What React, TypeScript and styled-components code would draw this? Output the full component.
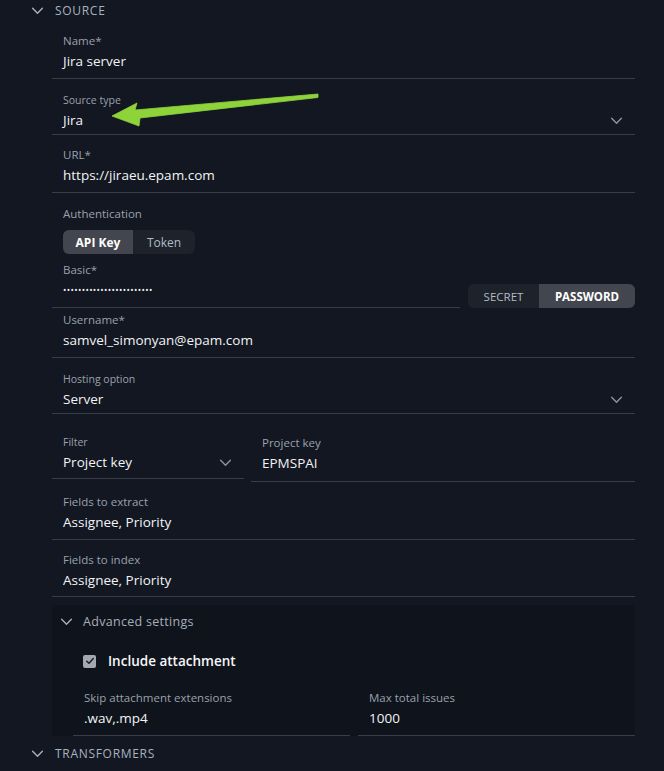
import styled, { createGlobalStyle } from "styled-components";

const GlobalStyle = createGlobalStyle`
  html, body {
    margin: 0;
    padding: 0;
    background: #121721;
  }
  body {
    font-family: "Open Sans", "DejaVu Sans", sans-serif;
    color: #f1f2f4;
  }
`;

const Page = styled.div`
  position: relative;
  width: 664px;
  height: 771px;
  overflow: hidden;
  background: #121721;
`;

const SectionHeader = styled.div<{ $top?: number }>`
  display: flex;
  align-items: center;
  gap: 11px;
  height: 20px;
  padding-left: 31px;
  margin-top: ${(p) => p.$top ?? 0}px;
  color: #a9b2c0;
  font-size: 12px;
  font-weight: 500;
  letter-spacing: 0.7px;
  text-transform: uppercase;
`;

const Body = styled.div`
  display: flex;
  flex-direction: column;
  margin-left: 52px;
  width: 583px;
`;

const Field = styled.div<{ $pt?: number; $pb?: number }>`
  display: flex;
  align-items: flex-end;
  padding: ${(p) => p.$pt ?? 12}px 12px ${(p) => p.$pb ?? 6}px 11px;
  border-bottom: 1px solid #3a3d47;
  flex: 1;
`;

const FieldText = styled.div`
  display: flex;
  flex-direction: column;
  flex: 1;
  min-width: 0;
`;

const Label = styled.div<{ $small?: boolean }>`
  font-size: ${(p) => (p.$small ? "10.5px" : "11.5px")};
  line-height: ${(p) => (p.$small ? "14px" : "16px")};
  color: #9aa1ad;
  margin-bottom: ${(p) => (p.$small ? "2px" : "1px")};
`;

const Value = styled.div`
  font-size: 13.5px;
  line-height: 22px;
  color: #f2f3f5;
  white-space: nowrap;
`;

const Dots = styled(Value)`
  font-size: 9px;
  letter-spacing: 0.35px;
  line-height: 22px;
`;

const ChevronBox = styled.div`
  display: flex;
  align-items: center;
  height: 22px;
`;

const Row = styled.div<{ $gap: number; $top?: number; $align?: string }>`
  display: flex;
  align-items: ${(p) => p.$align ?? "flex-end"};
  gap: ${(p) => p.$gap}px;
  margin-top: ${(p) => p.$top ?? 0}px;
`;

const FilterCell = styled.div`
  display: flex;
  width: 192px;
`;

const AuthBlock = styled.div`
  display: flex;
  flex-direction: column;
  padding: 13px 0 0 11px;
`;

const Segmented = styled.div<{ $h: number }>`
  display: inline-flex;
  flex-shrink: 0;
  height: ${(p) => p.$h}px;
  background: #1d222b;
  border-radius: 6px;
  overflow: hidden;
`;

const AuthSegmented = styled(Segmented)`
  align-self: flex-start;
`;

const Segment = styled.div<{ $active?: boolean; $w: number; $caps?: boolean }>`
  display: flex;
  align-items: center;
  justify-content: center;
  width: ${(p) => p.$w}px;
  background: ${(p) => (p.$active ? "#43464e" : "transparent")};
  color: ${(p) => (p.$active ? "#ffffff" : "#b4bac4")};
  font-size: ${(p) => (p.$caps ? "11.5px" : "12px")};
  font-weight: ${(p) => (p.$active ? 700 : 500)};
  text-transform: ${(p) => (p.$caps ? "uppercase" : "none")};
`;

const AuthLabel = styled(Label)`
  margin-bottom: 8px;
`;

const BasicLabel = styled(Label)`
  margin-top: 8px;
`;

const Advanced = styled.div`
  display: flex;
  flex-direction: column;
  margin-top: 8px;
  background: #0f131b;
`;

const AdvancedHeader = styled.div`
  display: flex;
  align-items: center;
  gap: 10px;
  height: 32px;
  padding-left: 8px;
  color: #a7afbb;
  font-size: 12.5px;
  font-weight: 500;
  letter-spacing: 0.3px;
`;

const CheckRow = styled.div`
  display: flex;
  align-items: center;
  gap: 12px;
  padding: 14px 0 0 31px;
  height: 20px;
`;

const Checkbox = styled.div`
  width: 13px;
  height: 13px;
  border-radius: 2px;
  background: #a3a8b1;
  display: flex;
  align-items: center;
  justify-content: center;
`;

const CheckLabel = styled.span`
  font-size: 13.5px;
  font-weight: 600;
  color: #f6f7f9;
`;

const AdvancedFields = styled.div`
  display: flex;
  gap: 8px;
  padding-left: 21px;
  margin-top: 19px;
`;

const Arrow = styled.svg`
  position: absolute;
  left: 0;
  top: 0;
  pointer-events: none;
`;

const Chevron = ({ color = "#9aa1ad", size = 12 }: { color?: string; size?: number }) => (
  <svg width={size} height={size} viewBox="0 0 12 12" fill="none">
    <path d="M1.5 4L6 8.5L10.5 4" stroke={color} strokeWidth="1.3" strokeLinecap="round" strokeLinejoin="round" />
  </svg>
);

function TextField({ label, value, pt, pb }: { label: string; value: string; pt?: number; pb?: number }) {
  return (
    <Field $pt={pt} $pb={pb}>
      <FieldText>
        <Label>{label}</Label>
        <Value>{value}</Value>
      </FieldText>
    </Field>
  );
}

function SelectField({ label, value, pt, pb }: { label: string; value: string; pt?: number; pb?: number }) {
  return (
    <Field $pt={pt ?? 14} $pb={pb ?? 3}>
      <FieldText>
        <Label $small>{label}</Label>
        <Value>{value}</Value>
      </FieldText>
      <ChevronBox>
        <Chevron color="#8d94a0" size={13} />
      </ChevronBox>
    </Field>
  );
}

export default function App() {
  return (
    <Page>
      <GlobalStyle />
      <SectionHeader>
        <Chevron color="#a9b2c0" size={13} />
        <span>Source</span>
      </SectionHeader>
      <Body>
        <TextField label="Name*" value="Jira server" pt={13} />
        <SelectField label="Source type" value="Jira" />
        <TextField label="URL*" value="https://jiraeu.epam.com" />
        <AuthBlock>
          <AuthLabel>Authentication</AuthLabel>
          <AuthSegmented $h={24}>
            <Segment $active $w={70}>API Key</Segment>
            <Segment $w={62}>Token</Segment>
          </AuthSegmented>
        </AuthBlock>
        <Row $gap={8}>
          <Field $pt={0} $pb={6}>
            <FieldText>
              <BasicLabel>Basic*</BasicLabel>
              <Dots>••••••••••••••••••••••••</Dots>
            </FieldText>
          </Field>
          <Segmented $h={24}>
            <Segment $w={71} $caps>Secret</Segment>
            <Segment $active $w={96} $caps>Password</Segment>
          </Segmented>
        </Row>
        <TextField label="Username*" value="samvel_simonyan@epam.com" pt={4} />
        <SelectField label="Hosting option" value="Server" />
        <Row $gap={7} $top={7} $align="flex-start">
          <FilterCell>
            <SelectField label="Filter" value="Project key" pt={14} pb={5} />
          </FilterCell>
          <TextField label="Project key" value="EPMSPAI" pt={14} pb={7} />
        </Row>
        <TextField label="Fields to extract" value="Assignee, Priority" />
        <TextField label="Fields to index" value="Assignee, Priority" pb={5} />
        <Advanced>
          <AdvancedHeader>
            <Chevron color="#a7afbb" size={13} />
            <span>Advanced settings</span>
          </AdvancedHeader>
          <CheckRow>
            <Checkbox>
              <svg width="10" height="10" viewBox="0 0 10 10" fill="none">
                <path d="M1.8 5.2L4 7.3L8.3 2.6" stroke="#1a1f28" strokeWidth="1.5" strokeLinecap="round" strokeLinejoin="round" />
              </svg>
            </Checkbox>
            <CheckLabel>Include attachment</CheckLabel>
          </CheckRow>
          <AdvancedFields>
            <TextField label="Skip attachment extensions" value=".wav,.mp4" pt={0} />
            <TextField label="Max total issues" value="1000" pt={0} />
          </AdvancedFields>
        </Advanced>
      </Body>
      <SectionHeader $top={7}>
        <Chevron color="#a9b2c0" size={13} />
        <span>Transformers</span>
      </SectionHeader>
      <Arrow width="664" height="771" viewBox="0 0 664 771">
        <polygon
          points="112,116 137,103 135,110 318,94 318,97.5 140,118 139,126"
          fill="#8fd33b"
          stroke="#8fd33b"
          strokeWidth="0.8"
          strokeLinejoin="round"
        />
      </Arrow>
    </Page>
  );
}
